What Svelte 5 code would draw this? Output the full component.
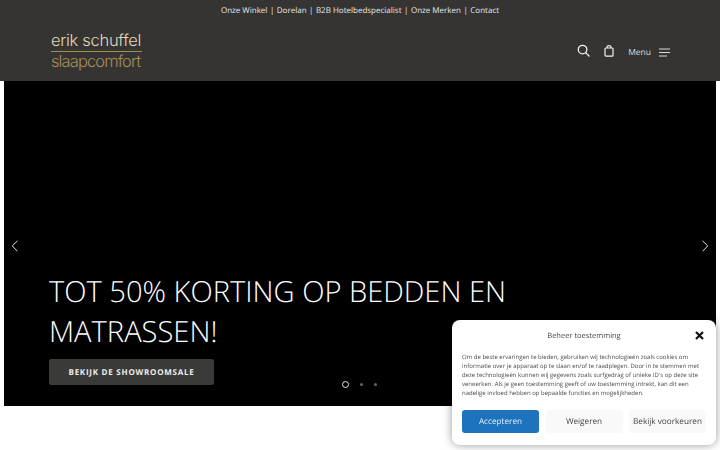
<script>
  const links = ['Onze Winkel', 'Dorelan', 'B2B Hotelbedspecialist', 'Onze Merken', 'Contact'];
</script>

<header class="header">
  <nav class="top">
    {#each links as link, i}
      {#if i > 0}<span class="sep">|</span>{/if}
      <a href="#x">{link}</a>
    {/each}
  </nav>
  <div class="bar">
    <div class="logo">
      <div class="logo-a">erik schuffel</div>
      <div class="logo-b">slaapcomfort</div>
    </div>
    <div class="tools">
      <svg class="search" width="13" height="13" viewBox="0 0 14 14" fill="none" stroke="#f2f2f2" stroke-width="1.4">
        <circle cx="6" cy="6" r="4.6" />
        <path d="M9.3 9.3 L13 13" stroke-linecap="round" />
      </svg>
      <svg class="bag" width="10" height="12" viewBox="0 0 10 12" fill="none" stroke="#f2f2f2" stroke-width="1.2">
        <rect x="1" y="3" width="8" height="8.2" rx="1" />
        <path d="M3 3 V2 a2 1.4 0 0 1 4 0 V3" />
      </svg>
      <span class="menu">Menu</span>
      <svg class="burger" width="11" height="9" viewBox="0 0 11 9" fill="none" stroke="#d8d8d8" stroke-width="1.2">
        <path d="M0 1 H11 M0 4.5 H11 M0 8 H8" />
      </svg>
    </div>
  </div>
</header>

<main class="hero">
  <svg class="arrow left" width="8" height="12" viewBox="0 0 8 12" fill="none" stroke="#e6e6e6" stroke-width="1">
    <path d="M6.5 0.8 L1.2 6 L6.5 11.2" />
  </svg>
  <svg class="arrow right" width="8" height="12" viewBox="0 0 8 12" fill="none" stroke="#e6e6e6" stroke-width="1">
    <path d="M1.5 0.8 L6.8 6 L1.5 11.2" />
  </svg>
  <div class="copy">
    <h1>TOT 50% KORTING OP BEDDEN EN MATRASSEN!</h1>
    <a class="cta" href="#x">BEKIJK DE SHOWROOMSALE</a>
  </div>
  <div class="dots">
    <span class="dot active"></span>
    <span class="dot"></span>
    <span class="dot"></span>
  </div>
</main>

<aside class="consent">
  <div class="c-head">
    <span class="c-title">Beheer toestemming</span>
    <svg class="close" width="9" height="9" viewBox="0 0 9 9" stroke="#111" stroke-width="2.2" fill="none">
      <path d="M1 1 L8 8 M8 1 L1 8" />
    </svg>
  </div>
  <p class="c-text">Om de beste ervaringen te bieden, gebruiken wij technologieën zoals cookies om informatie over je apparaat op te slaan en/of te raadplegen. Door in te stemmen met deze technologieën kunnen wij gegevens zoals surfgedrag of unieke ID's op deze site verwerken. Als je geen toestemming geeft of uw toestemming intrekt, kan dit een nadelige invloed hebben op bepaalde functies en mogelijkheden.</p>
  <div class="c-btns">
    <button class="accept">Accepteren</button>
    <button>Weigeren</button>
    <button>Bekijk voorkeuren</button>
  </div>
</aside>

<style>
  :global(body) {
    margin: 0;
    background: #fff;
    font-family: "Open Sans", sans-serif;
    height: 450px;
    overflow: hidden;
    text-rendering: geometricPrecision;
  }
  .header {
    background: #353433;
    height: 81px;
    display: flex;
    flex-direction: column;
    will-change: opacity;
  }
  .top {
    height: 22px;
    display: flex;
    justify-content: center;
    gap: 2.5px;
    font-size: 8px;
    line-height: 22px;
    color: #e8e8e8;
    white-space: nowrap;
  }
  .top a { color: inherit; text-decoration: none; }
  .bar {
    flex: 1;
    display: flex;
    align-items: center;
    justify-content: space-between;
    padding: 0 50px 0 51px;
  }
  .logo { width: 91px; margin-top: -1px; }
  .logo-a {
    font-family: Inter, sans-serif;
    font-weight: 300;
    font-size: 16.5px;
    line-height: 17px;
    letter-spacing: -0.3px;
    color: #e3d8b8;
    white-space: nowrap;
    border-bottom: 1px solid #a58f55;
    padding-bottom: 2px;
  }
  .logo-b {
    font-family: Inter, sans-serif;
    font-weight: 300;
    font-size: 16.5px;
    line-height: 18px;
    letter-spacing: -0.9px;
    color: #a58f55;
    white-space: nowrap;
  }
  .tools { display: flex; align-items: center; color: #ddd; margin-top: -2px; }
  .search { margin-right: 14px; }
  .bag { margin-right: 14px; }
  .menu { font-size: 8.5px; margin-right: 8px; position: relative; top: 2px; }
  .burger { position: relative; top: 2px; }
  .hero {
    position: relative;
    background: #000;
    margin: 0 4px;
    height: 325px;
    color: #fff;
    will-change: opacity;
  }
  .arrow { position: absolute; top: 159px; }
  .arrow.left { left: 7px; }
  .arrow.right { right: 7px; }
  .copy {
    position: absolute;
    left: 45px;
    top: 190px;
    width: 500px;
  }
  h1 {
    margin: 0 0 8px;
    font-weight: 300;
    font-size: 29.1px;
    line-height: 40px;
    color: #fff;
  }
  .cta {
    display: flex;
    align-items: center;
    justify-content: center;
    width: 165px;
    height: 26px;
    background: #3a3a39;
    border-radius: 2px;
    color: #eee;
    font-size: 8px;
    font-weight: 700;
    letter-spacing: 0.75px;
    text-decoration: none;
  }
  .dots {
    position: absolute;
    left: 338px;
    top: 300px;
    display: flex;
    align-items: center;
    gap: 11px;
  }
  .dot { width: 3px; height: 3px; border-radius: 50%; background: #666; }
  .dot.active {
    width: 5px;
    height: 5px;
    background: none;
    border: 1px solid #e6e6e6;
  }
  .consent {
    position: fixed;
    left: 452px;
    top: 320px;
    width: 264px;
    height: 125px;
    box-sizing: border-box;
    background: #fff;
    border-radius: 8px;
    box-shadow: 0 0 10px rgba(0, 0, 0, 0.4);
    padding: 10px 10px 0;
    color: #333;
  }
  .c-head {
    display: flex;
    justify-content: center;
    position: relative;
    height: 12px;
  }
  .c-title { font-size: 7.5px; line-height: 12px; color: #444; }
  .close { position: absolute; right: 2px; top: 1px; }
  .c-text {
    margin: 11px 0 0;
    font-size: 6px;
    line-height: 9.1px;
    color: #4a4a4a;
  }
  .c-btns {
    display: flex;
    justify-content: space-between;
    gap: 5px;
    margin-top: 12px;
  }
  button {
    flex: none;
    width: 77px;
    height: 23px;
    padding: 0;
    border: 0;
    border-radius: 3px;
    background: #f9f9f9;
    color: #444;
    font-family: "Open Sans", sans-serif;
    font-size: 8.2px;
    white-space: nowrap;
    text-rendering: geometricPrecision;
  }
  button.accept { background: #1e73be; color: #e8f0f8; }
</style>
